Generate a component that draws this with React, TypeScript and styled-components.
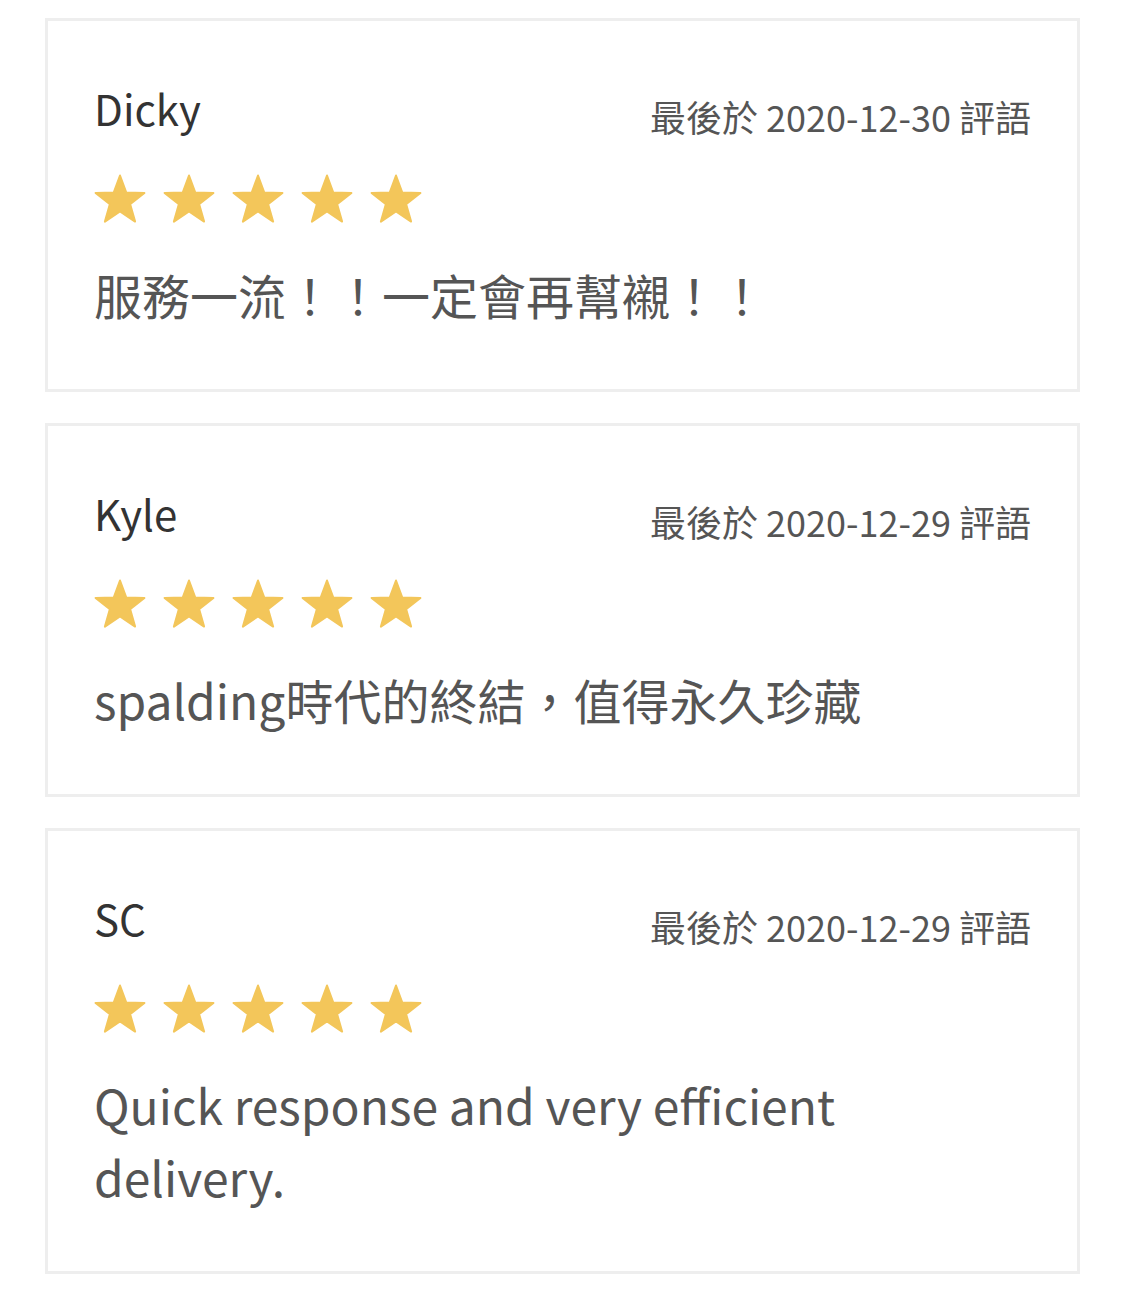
import React from "react";
import styled, { createGlobalStyle } from "styled-components";

interface Review {
  name: string;
  date: string;
  rating: number;
  comment: string;
}

const reviews: Review[] = [
  {
    name: "Dicky",
    date: "2020-12-30",
    rating: 5,
    comment: "服務一流！！一定會再幫襯！！",
  },
  {
    name: "Kyle",
    date: "2020-12-29",
    rating: 5,
    comment: "spalding時代的終結，值得永久珍藏",
  },
  {
    name: "SC",
    date: "2020-12-29",
    rating: 5,
    comment: "Quick response and very efficient delivery.",
  },
];

function Star() {
  return (
    <StarIcon viewBox="0 0 52 50" aria-hidden="true">
      <polygon
        points="26,1.5 32.2,18.4 50.4,18.9 36.1,30.1 41.1,47.6 26,37.4 10.9,47.6 15.9,30.1 1.6,18.9 19.8,18.4"
        fill="#f3c65a"
        stroke="#f3c65a"
        strokeWidth="2"
        strokeLinejoin="round"
      />
    </StarIcon>
  );
}

function ReviewCard({ review }: { review: Review }) {
  return (
    <Card>
      <Header>
        <Name>{review.name}</Name>
        <DateText>最後於 {review.date} 評語</DateText>
      </Header>
      <Stars>
        {Array.from({ length: review.rating }).map((_, i) => (
          <Star key={i} />
        ))}
      </Stars>
      <Comment>{review.comment}</Comment>
    </Card>
  );
}

function App() {
  return (
    <>
      <GlobalStyle />
      <List>
        {reviews.map((r) => (
          <ReviewCard key={r.name} review={r} />
        ))}
      </List>
    </>
  );
}

const GlobalStyle = createGlobalStyle`
  body {
    margin: 0;
    background: #ffffff;
    font-family: "Noto Sans CJK TC", "Noto Sans", sans-serif;
  }
`;

const List = styled.div`
  display: flex;
  flex-direction: column;
  gap: 31px;
  padding: 18px 45px 0;
`;

const Card = styled.div`
  border: 3px solid #eeeeee;
  padding: 55px 46px 59px;
  background: #fff;
`;

const Header = styled.div`
  display: flex;
  justify-content: space-between;
  align-items: flex-start;
  height: 63px;
`;

const Name = styled.div`
  font-size: 42px;
  line-height: 63px;
  color: #333333;
`;

const DateText = styled.div`
  font-size: 36px;
  line-height: 36px;
  margin-top: 22px;
  color: #555555;
`;

const Stars = styled.div`
  display: flex;
  gap: 17px;
  margin-top: 35px;
  height: 50px;
`;

const StarIcon = styled.svg`
  width: 52px;
  height: 50px;
  display: block;
`;

const Comment = styled.div`
  margin-top: 34px;
  font-size: 48px;
  line-height: 72px;
  color: #555555;
`;

export default App;
